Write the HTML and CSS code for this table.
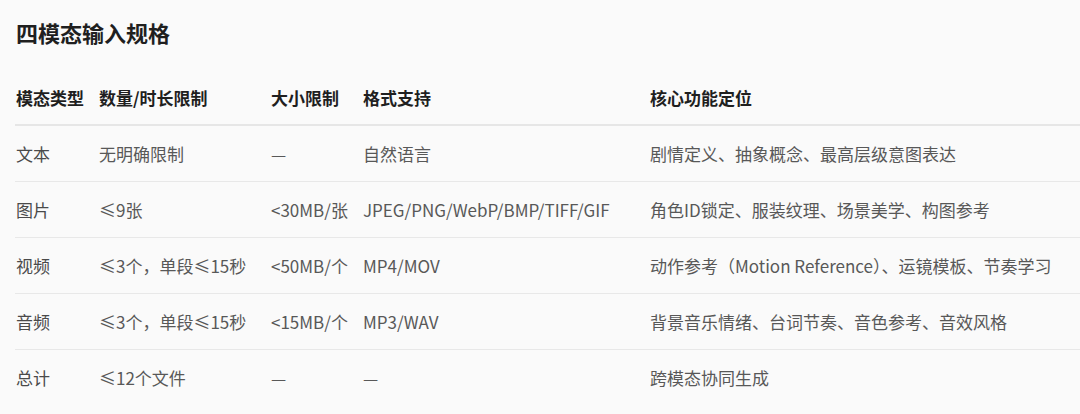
FILE: index.html
```html
<!DOCTYPE html>
<html lang="zh">
<head>
<meta charset="utf-8">
<link rel="stylesheet" href="styles.css">
</head>
<body>
<h2 class="title">四模态输入规格</h2>
<table class="spec">
  <colgroup>
    <col class="c1"><col class="c2"><col class="c3"><col class="c4"><col class="c5">
  </colgroup>
  <thead>
    <tr><th>模态类型</th><th>数量/时长限制</th><th>大小限制</th><th>格式支持</th><th>核心功能定位</th></tr>
  </thead>
  <tbody>
    <tr><td>文本</td><td>无明确限制</td><td>—</td><td>自然语言</td><td>剧情定义、抽象概念、最高层级意图表达</td></tr>
    <tr><td>图片</td><td>≤9张</td><td>&lt;30MB/张</td><td>JPEG/PNG/WebP/BMP/TIFF/GIF</td><td>角色ID锁定、服装纹理、场景美学、构图参考</td></tr>
    <tr><td>视频</td><td>≤3个，单段≤15秒</td><td>&lt;50MB/个</td><td>MP4/MOV</td><td>动作参考（Motion Reference）、运镜模板、节奏学习</td></tr>
    <tr><td>音频</td><td>≤3个，单段≤15秒</td><td>&lt;15MB/个</td><td>MP3/WAV</td><td>背景音乐情绪、台词节奏、音色参考、音效风格</td></tr>
    <tr><td>总计</td><td>≤12个文件</td><td>—</td><td>—</td><td>跨模态协同生成</td></tr>
  </tbody>
</table>
</body>
</html>
```
FILE: styles.css
```css
html, body {
  margin: 0;
  padding: 0;
  background: #fafafa;
  overflow: hidden;
}
body {
  padding-left: 15px;
  font-family: "Noto Sans CJK SC", "Noto Sans", sans-serif;
  color: #555;
}
.title {
  margin: 17px 0 24px 1px;
  font-size: 22px;
  line-height: 30px;
  font-weight: 700;
  color: #1f1f1f;
}
.spec {
  border-collapse: collapse;
  table-layout: fixed;
  width: 1065px;
  font-size: 17px;
}
.c1 { width: 83px; }
.c2 { width: 172px; }
.c3 { width: 92px; }
.c4 { width: 287px; }
.c5 { width: auto; }
.spec th, .spec td {
  padding: 0 0 0 1px;
  text-align: left;
  white-space: nowrap;
  height: 55px;
  line-height: 24px;
  vertical-align: middle;
}
.spec th {
  height: 53px;
  font-weight: 700;
  color: #1f1f1f;
  border-bottom: 2px solid #e6e6e6;
}
.spec td {
  color: #585858;
  border-bottom: 1px solid #e8e8e8;
}
.spec td:first-child {
  color: #4a4a4a;
}
.spec tbody tr:last-child td {
  border-bottom: none;
}
```
